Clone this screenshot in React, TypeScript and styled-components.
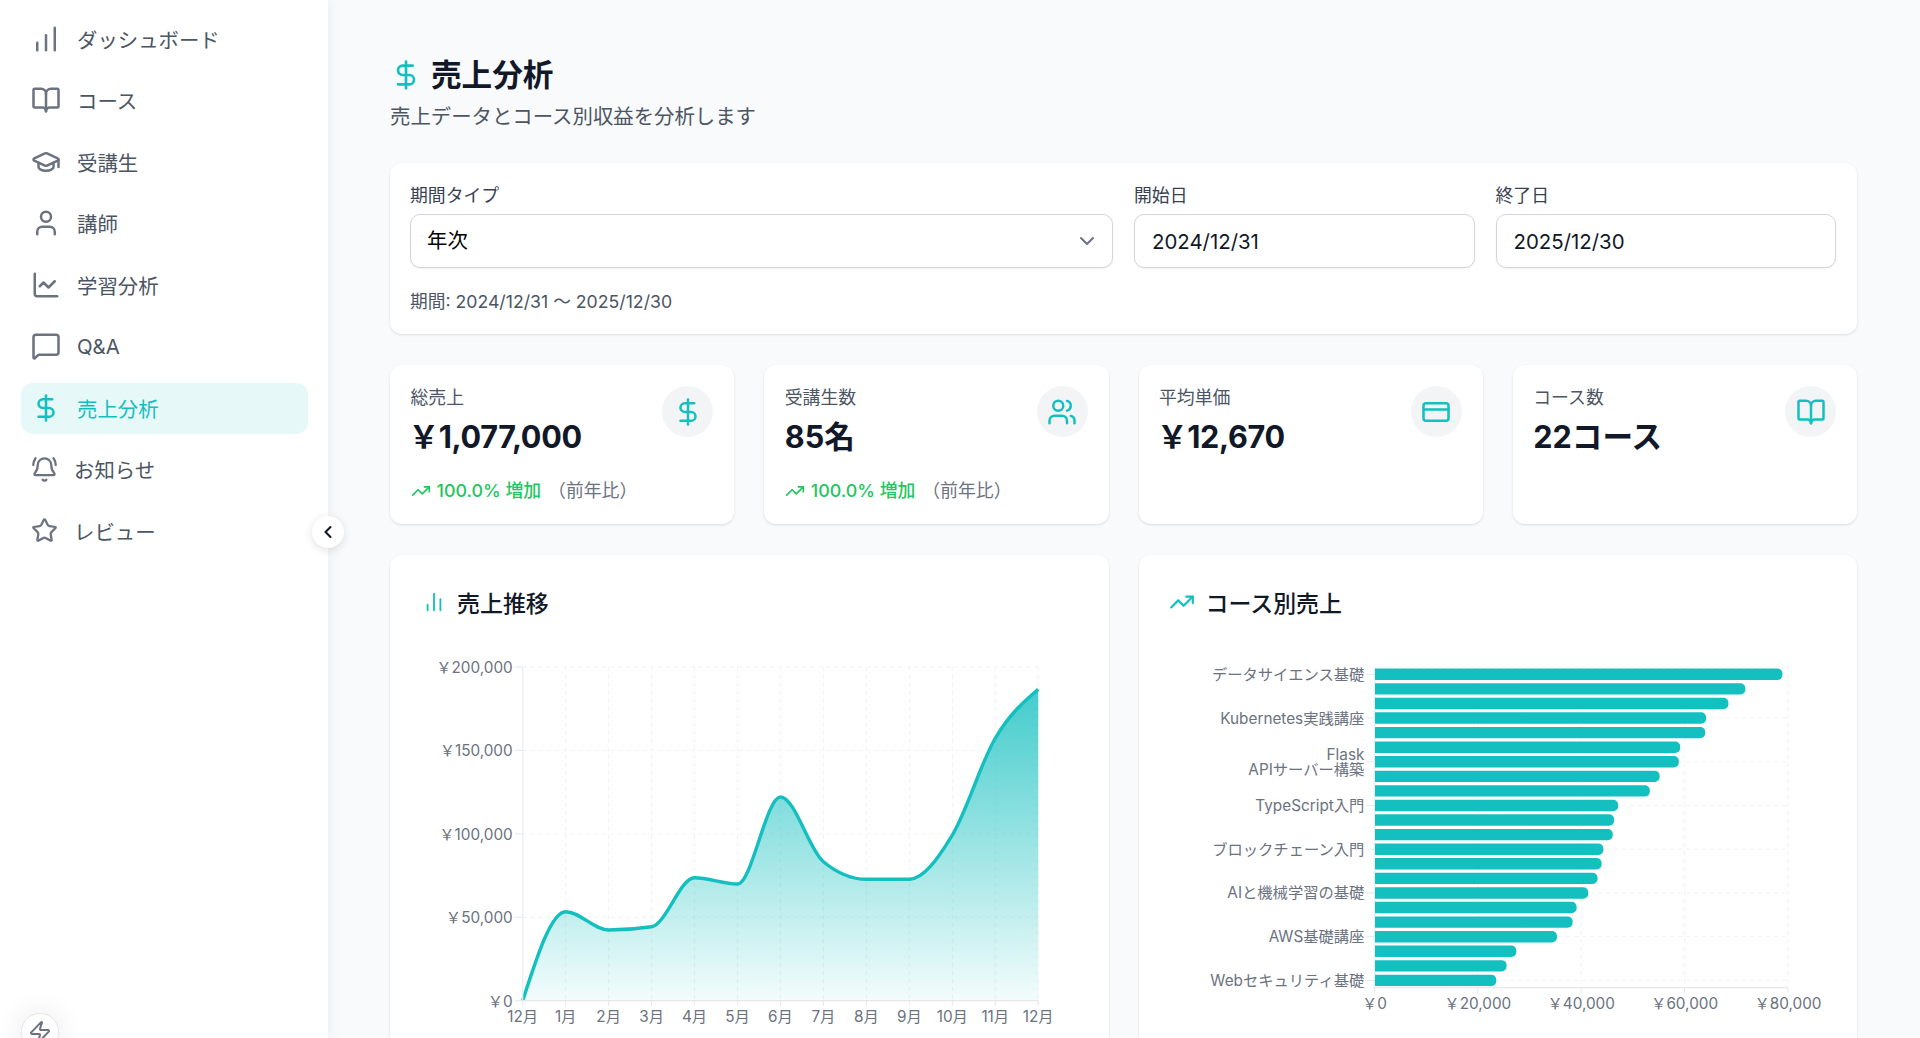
import React from 'react'
import styled, { createGlobalStyle } from 'styled-components'
import {
  BellRing,
  BookOpen,
  ChartLine,
  ChartNoAxesColumn,
  ChartNoAxesColumnIncreasing,
  ChevronDown,
  ChevronLeft,
  CreditCard,
  DollarSign,
  GraduationCap,
  MessageSquare,
  Star,
  TrendingUp,
  User,
  Users,
  Zap,
} from 'lucide-react'

const TEAL = '#14bfbf'
// ja-JP currency formatting gives the full width yen sign
const YEN = '\uFFE5'

const GlobalStyle = createGlobalStyle`
  html, body {
    margin: 0;
    height: 100%;
    overflow: hidden;
    background: #f9fafb;
    font-family: Inter, "Noto Sans CJK JP", "Noto Sans", sans-serif;
  }
  * {
    box-sizing: border-box;
  }
`

const Shell = styled.div`
  display: flex;
  height: 1038px;
  overflow: hidden;
`

const Sidebar = styled.aside`
  position: relative;
  z-index: 2;
  flex: 0 0 328px;
  padding: 13.5px 20px 0 21px;
  background: #fff;
  box-shadow: 0 0 14px rgba(0, 0, 0, 0.07);
`

const NavList = styled.nav`
  display: flex;
  flex-direction: column;
  gap: 10px;
`

const NavItem = styled.a<{ $active?: boolean }>`
  display: flex;
  align-items: center;
  gap: 16px;
  height: 51.5px;
  padding-left: 10px;
  padding-bottom: 1px;
  border-radius: 12px;
  font-size: 20.4px;
  color: ${({ $active }) => ($active ? TEAL : '#4b5563')};
  background: ${({ $active }) => ($active ? '#e6f8f8' : 'transparent')};

  svg {
    flex: none;
    color: ${({ $active }) => ($active ? TEAL : '#6b7280')};
  }
`

const CollapseButton = styled.button`
  position: absolute;
  top: 516px;
  right: -16px;
  display: flex;
  align-items: center;
  justify-content: center;
  width: 32px;
  height: 32px;
  padding: 0;
  border: none;
  border-radius: 50%;
  background: #fff;
  color: #111827;
  box-shadow: 0 2px 8px rgba(0, 0, 0, 0.12);
`

const BoltButton = styled.button`
  position: absolute;
  left: 21px;
  top: 1013px;
  display: flex;
  align-items: center;
  justify-content: center;
  width: 38px;
  height: 38px;
  padding: 0;
  border: 1px solid #e5e7eb;
  border-radius: 50%;
  background: #fff;
  color: #6b7280;
  box-shadow: 0 0 28px rgba(0, 0, 0, 0.1);
`

const Main = styled.main`
  flex: 1;
  min-width: 0;
  padding: 55px 63px 0 62px;
`

const TitleRow = styled.div`
  display: flex;
  align-items: center;
  gap: 9px;
  height: 40px;
  color: ${TEAL};
`

const PageTitle = styled.h1`
  margin: 0;
  font-size: 30.6px;
  font-weight: 700;
  line-height: 40px;
  color: #111827;
`

const Subtitle = styled.p`
  margin: 8px 0 32px;
  font-size: 20.4px;
  line-height: 28px;
  color: #4b5563;
`

const Card = styled.section`
  border-radius: 12px;
  background: #fff;
  box-shadow: 0 1px 3px rgba(0, 0, 0, 0.1), 0 1px 2px -1px rgba(0, 0, 0, 0.08);
`

const FilterCard = styled(Card)`
  padding: 21px 21px 20px 20px;
`

const FilterGrid = styled.div`
  display: grid;
  grid-template-columns: 703px 1fr 1fr;
  gap: 21px;
`

const FieldLabel = styled.label`
  display: block;
  margin-bottom: 6px;
  font-size: 17.85px;
  line-height: 24px;
  color: #374151;
`

const SelectBox = styled.div`
  display: flex;
  align-items: center;
  justify-content: space-between;
  height: 54px;
  padding: 0 13px 0 16px;
  border: 1px solid #d1d5db;
  border-radius: 10px;
  background: #fff;
  box-shadow: 0 1px 2px rgba(0, 0, 0, 0.05);
  font-size: 20.4px;
  line-height: 26px;
  color: #000;

  svg {
    color: #6b7280;
  }
`

const DateInput = styled.input`
  display: block;
  width: 100%;
  height: 54px;
  padding: 0 17px;
  border: 1px solid #d1d5db;
  border-radius: 10px;
  outline: none;
  background: #fff;
  box-shadow: 0 1px 2px rgba(0, 0, 0, 0.05);
  font-family: inherit;
  font-size: 20.4px;
  color: #111827;
`

const PeriodText = styled.p`
  margin: 21px 0 0;
  font-size: 17.7px;
  line-height: 25px;
  color: #4b5563;
`

const StatGrid = styled.div`
  display: grid;
  grid-template-columns: repeat(4, 1fr);
  gap: 30px;
  margin-top: 31px;
`

const StatCard = styled(Card)`
  display: flex;
  justify-content: space-between;
  align-items: flex-start;
  padding: 21px 21px 21px 20.5px;
`

const StatLabel = styled.div`
  font-size: 17.85px;
  line-height: 24px;
  color: #4b5563;
`

const StatValue = styled.div<{ $money?: boolean }>`
  margin-top: 7px;
  margin-left: ${({ $money }) => ($money ? -2 : 0)}px;
  font-size: 30.6px;
  font-weight: 700;
  line-height: 40px;
  letter-spacing: ${({ $money }) => ($money ? -0.35 : 0)}px;
  color: #111827;
`

const StatTrend = styled.div`
  display: flex;
  align-items: center;
  gap: 6px;
  margin-top: 22px;
  font-size: 17.85px;
  line-height: 24px;
  font-weight: 500;
  color: #22c55e;
`

const TrendNote = styled.span`
  margin-left: 1px;
  font-weight: 400;
  color: #6b7280;
`

const StatIcon = styled.div`
  display: flex;
  flex: none;
  align-items: center;
  justify-content: center;
  width: 51px;
  height: 51px;
  border-radius: 50%;
  background: #f3f4f6;
  color: ${TEAL};
`

const ChartGrid = styled.div`
  display: grid;
  grid-template-columns: repeat(2, 1fr);
  gap: 30px;
  margin-top: 31px;
`

const ChartCard = styled(Card)`
  padding: 30px;
`

const ChartTitle = styled.h2`
  display: flex;
  align-items: center;
  gap: 11px;
  height: 34px;
  margin: 0 0 27px;
  font-size: 22.95px;
  font-weight: 500;
  color: #111827;

  svg {
    color: ${TEAL};
  }
`

const SalesTitleIcon = styled(ChartNoAxesColumn)`
  margin: 0 1px 0 3px;
`

const ChartSvg = styled.svg`
  display: block;
  width: 658px;
  height: 500px;
`

const AxisText = styled.text`
  font-size: 15.3px;
  fill: #6b7280;
`

const navItems = [
  { label: 'ダッシュボード', icon: ChartNoAxesColumnIncreasing, size: 30 },
  { label: 'コース', icon: BookOpen, size: 30 },
  { label: '受講生', icon: GraduationCap, size: 30 },
  { label: '講師', icon: User, size: 30 },
  { label: '学習分析', icon: ChartLine, size: 30 },
  { label: 'Q&A', icon: MessageSquare, size: 30 },
  { label: '売上分析', icon: DollarSign, size: 30, active: true },
  { label: 'お知らせ', icon: BellRing, size: 27 },
  { label: 'レビュー', icon: Star, size: 27 },
]

const stats = [
  { label: '総売上', value: `${YEN}1,077,000`, icon: DollarSign, trend: true, money: true },
  { label: '受講生数', value: '85名', icon: Users, trend: true },
  { label: '平均単価', value: `${YEN}12,670`, icon: CreditCard, money: true },
  { label: 'コース数', value: '22コース', icon: BookOpen },
]

// sales chart, in svg coordinates (svg origin is at 420,646 on the page)
const SALES = [0, 53340, 42400, 44350, 73700, 69900, 122100, 83300, 72750, 72750, 99300, 157300, 186700]
const MONTHS = ['12月', '1月', '2月', '3月', '4月', '5月', '6月', '7月', '8月', '9月', '10月', '11月', '12月']
const SALES_LEFT = 102.7
const SALES_STEP = 42.96
const SALES_TOP = 21
const SALES_BOTTOM = 354.7

const salesX = (i: number) => SALES_LEFT + i * SALES_STEP
const salesY = (v: number) => SALES_BOTTOM - (v / 200000) * (SALES_BOTTOM - SALES_TOP)

// same curve as d3 curveMonotoneX
const monotonePath = (pts: [number, number][]) => {
  const n = pts.length
  const slopes: number[] = []
  for (let i = 1; i < n - 1; i++) {
    const h0 = pts[i][0] - pts[i - 1][0]
    const h1 = pts[i + 1][0] - pts[i][0]
    const s0 = (pts[i][1] - pts[i - 1][1]) / h0
    const s1 = (pts[i + 1][1] - pts[i][1]) / h1
    const p = (s0 * h1 + s1 * h0) / (h0 + h1)
    slopes[i] = (Math.sign(s0) + Math.sign(s1)) * Math.min(Math.abs(s0), Math.abs(s1), 0.5 * Math.abs(p)) || 0
  }
  const edge = (a: [number, number], b: [number, number], t: number) => (3 * (b[1] - a[1])) / (b[0] - a[0]) / 2 - t / 2
  slopes[0] = edge(pts[0], pts[1], slopes[1])
  slopes[n - 1] = edge(pts[n - 2], pts[n - 1], slopes[n - 2])
  let d = `M${pts[0][0]},${pts[0][1]}`
  for (let i = 1; i < n; i++) {
    const dx = (pts[i][0] - pts[i - 1][0]) / 3
    d += `C${pts[i - 1][0] + dx},${pts[i - 1][1] + dx * slopes[i - 1]} ${pts[i][0] - dx},${pts[i][1] - dx * slopes[i]} ${pts[i][0]},${pts[i][1]}`
  }
  return d
}

const yen = (v: number) => `${YEN}${v.toLocaleString('en-US')}`

const SalesChart = () => {
  const line = monotonePath(SALES.map((v, i) => [salesX(i), salesY(v)]))
  const area = `${line}L${salesX(12)},${SALES_BOTTOM}L${salesX(0)},${SALES_BOTTOM}Z`
  return (
    <ChartSvg viewBox="0 0 658 500">
      <defs>
        <linearGradient id="salesFill" x1="0" y1="0" x2="0" y2="1">
          <stop offset="0%" stopColor={TEAL} stopOpacity={0.8} />
          <stop offset="100%" stopColor={TEAL} stopOpacity={0.05} />
        </linearGradient>
      </defs>
      {MONTHS.map((_, i) => (
        <line key={i} x1={salesX(i)} x2={salesX(i)} y1={SALES_TOP} y2={SALES_BOTTOM} stroke="#f1f2f4" strokeDasharray="4 4" />
      ))}
      {[50000, 100000, 150000, 200000].map((v) => (
        <line key={v} x1={SALES_LEFT} x2={salesX(12)} y1={salesY(v)} y2={salesY(v)} stroke="#f1f2f4" strokeDasharray="4 4" />
      ))}
      <path d={area} fill="url(#salesFill)" />
      <path d={line} fill="none" stroke={TEAL} strokeWidth={3.4} />
      <line x1={SALES_LEFT} x2={SALES_LEFT} y1={SALES_TOP} y2={SALES_BOTTOM} stroke="#eceef1" strokeWidth={1.2} />
      <line x1={SALES_LEFT} x2={salesX(12)} y1={SALES_BOTTOM} y2={SALES_BOTTOM} stroke="#e5e7eb" strokeWidth={1.2} />
      {[0, 50000, 100000, 150000, 200000].map((v) => (
        <g key={v}>
          <line x1={SALES_LEFT - 8} x2={SALES_LEFT} y1={salesY(v)} y2={salesY(v)} stroke="#e5e7eb" />
          <AxisText x={SALES_LEFT - 10} y={salesY(v) + 6} textAnchor="end">
            {yen(v)}
          </AxisText>
        </g>
      ))}
      {MONTHS.map((m, i) => (
        <g key={i}>
          <line x1={salesX(i)} x2={salesX(i)} y1={SALES_BOTTOM} y2={SALES_BOTTOM + 5} stroke="#e5e7eb" />
          <AxisText x={salesX(i)} y={376} textAnchor="middle">
            {m}
          </AxisText>
        </g>
      ))}
    </ChartSvg>
  )
}

// course chart, svg origin is at 1169,646 on the page
const COURSE_SALES = [
  78924, 71757, 68476, 64158, 63985, 59150, 58891, 55178, 53278, 47147, 46370, 46111, 44298, 43952, 43175, 41362, 39116,
  38339, 35317, 27459, 25560, 23574,
]
const COURSE_LABELS: Record<number, string[]> = {
  0: ['データサイエンス基礎'],
  3: ['Kubernetes実践講座'],
  6: ['Flask', 'APIサーバー構築'],
  9: ['TypeScript入門'],
  12: ['ブロックチェーン入門'],
  15: ['AIと機械学習の基礎'],
  18: ['AWS基礎講座'],
  21: ['Webセキュリティ基礎'],
}
const COURSE_LEFT = 205.4
const COURSE_RIGHT = 619
const COURSE_TOP = 21
const COURSE_BOTTOM = 341.7
const BAND = (COURSE_BOTTOM - COURSE_TOP) / COURSE_SALES.length

const courseX = (v: number) => COURSE_LEFT + (v / 80000) * (COURSE_RIGHT - COURSE_LEFT)
const courseY = (i: number) => COURSE_TOP + (i + 0.5) * BAND

const barPath = (v: number, cy: number) => {
  const h = 11.4
  const r = 5
  const right = courseX(v)
  const top = cy - h / 2
  const bottom = cy + h / 2
  return `M${COURSE_LEFT},${top}H${right - r}A${r},${r} 0 0 1 ${right},${top + r}V${bottom - r}A${r},${r} 0 0 1 ${right - r},${bottom}H${COURSE_LEFT}Z`
}

const CourseChart = () => (
  <ChartSvg viewBox="0 0 658 500">
    {[0, 20000, 40000, 60000, 80000].map((v) => (
      <line key={v} x1={courseX(v)} x2={courseX(v)} y1={COURSE_TOP} y2={COURSE_BOTTOM} stroke="#f1f2f4" strokeDasharray="4 4" />
    ))}
    <line x1={COURSE_LEFT} x2={COURSE_RIGHT} y1={COURSE_TOP} y2={COURSE_TOP} stroke="#f1f2f4" strokeDasharray="4 4" />
    {Object.keys(COURSE_LABELS).map((k) => (
      <line key={k} x1={COURSE_LEFT} x2={COURSE_RIGHT} y1={courseY(+k)} y2={courseY(+k)} stroke="#f1f2f4" strokeDasharray="4 4" />
    ))}
    {COURSE_SALES.map((v, i) => (
      <path key={i} d={barPath(v, courseY(i))} fill={TEAL} />
    ))}
    <line x1={COURSE_LEFT} x2={COURSE_LEFT} y1={COURSE_TOP} y2={COURSE_BOTTOM} stroke="#eceef1" strokeWidth={1.2} />
    <line x1={COURSE_LEFT} x2={COURSE_RIGHT} y1={COURSE_BOTTOM} y2={COURSE_BOTTOM} stroke="#e5e7eb" strokeWidth={1.2} />
    {Object.entries(COURSE_LABELS).map(([k, lines]) => (
      <g key={k}>
        <line x1={COURSE_LEFT - 8} x2={COURSE_LEFT} y1={courseY(+k)} y2={courseY(+k)} stroke="#e5e7eb" />
        {lines.map((text, n) => (
          <AxisText key={n} x={COURSE_LEFT - 10} y={courseY(+k) + 5.5 + (n - (lines.length - 1) / 2) * 15.5} textAnchor="end">
            {text}
          </AxisText>
        ))}
      </g>
    ))}
    {[0, 20000, 40000, 60000, 80000].map((v) => (
      <g key={v}>
        <line x1={courseX(v)} x2={courseX(v)} y1={COURSE_BOTTOM} y2={COURSE_BOTTOM + 5} stroke="#e5e7eb" />
        <AxisText x={courseX(v)} y={363} textAnchor="middle">
          {yen(v)}
        </AxisText>
      </g>
    ))}
  </ChartSvg>
)

const App: React.FC = () => (
  <>
    <GlobalStyle />
    <Shell>
      <Sidebar>
        <NavList>
          {navItems.map(({ label, icon: Icon, size, active }) => (
            <NavItem key={label} $active={active}>
              <Icon size={size} />
              {label}
            </NavItem>
          ))}
        </NavList>
        <CollapseButton>
          <ChevronLeft size={20} strokeWidth={2.5} />
        </CollapseButton>
        <BoltButton>
          <Zap size={24} />
        </BoltButton>
      </Sidebar>
      <Main>
        <TitleRow>
          <DollarSign size={32} />
          <PageTitle>売上分析</PageTitle>
        </TitleRow>
        <Subtitle>売上データとコース別収益を分析します</Subtitle>

        <FilterCard>
          <FilterGrid>
            <div>
              <FieldLabel>期間タイプ</FieldLabel>
              <SelectBox>
                年次
                <ChevronDown size={24} />
              </SelectBox>
            </div>
            <div>
              <FieldLabel>開始日</FieldLabel>
              <DateInput readOnly value="2024/12/31" />
            </div>
            <div>
              <FieldLabel>終了日</FieldLabel>
              <DateInput readOnly value="2025/12/30" />
            </div>
          </FilterGrid>
          <PeriodText>期間: 2024/12/31 〜 2025/12/30</PeriodText>
        </FilterCard>

        <StatGrid>
          {stats.map(({ label, value, icon: Icon, trend, money }) => (
            <StatCard key={label}>
              <div>
                <StatLabel>{label}</StatLabel>
                <StatValue $money={money}>{value}</StatValue>
                {trend && (
                  <StatTrend>
                    <TrendingUp size={20} />
                    <span>100.0% 増加</span>
                    <TrendNote>（前年比）</TrendNote>
                  </StatTrend>
                )}
              </div>
              <StatIcon>
                <Icon size={30} />
              </StatIcon>
            </StatCard>
          ))}
        </StatGrid>

        <ChartGrid>
          <ChartCard>
            <ChartTitle>
              <SalesTitleIcon size={22} />
              売上推移
            </ChartTitle>
            <SalesChart />
          </ChartCard>
          <ChartCard>
            <ChartTitle>
              <TrendingUp size={26} />
              コース別売上
            </ChartTitle>
            <CourseChart />
          </ChartCard>
        </ChartGrid>
      </Main>
    </Shell>
  </>
)

export default App
